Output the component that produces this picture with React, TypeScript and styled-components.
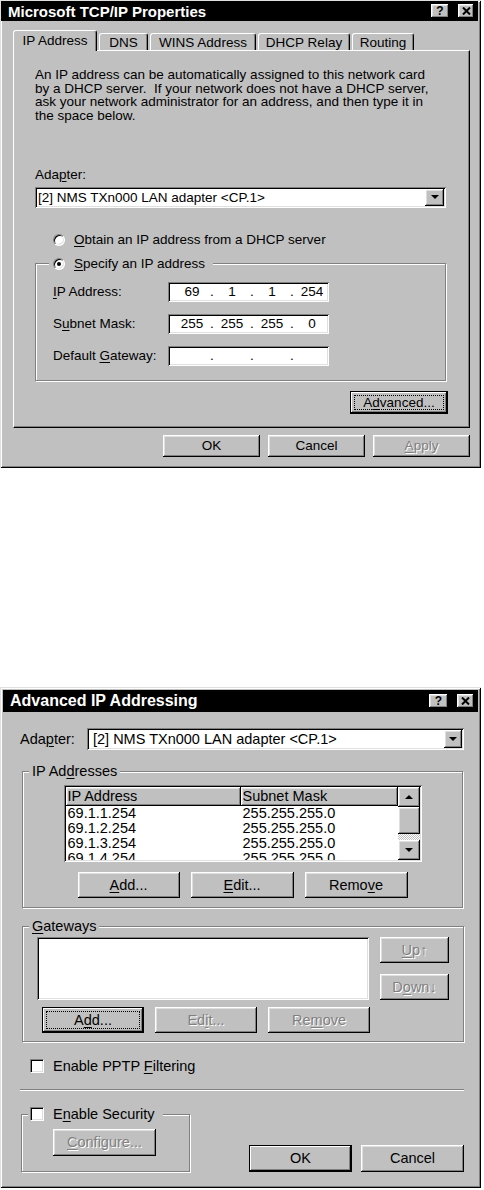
import React from 'react';
import styled, { createGlobalStyle, css } from 'styled-components';

const FACE = '#c0c0c0';

const GlobalStyle = createGlobalStyle`
  html, body { margin: 0; padding: 0; background: #fff; }
  body {
    font-family: "Liberation Sans", Arial, sans-serif;
    color: #000;
  }
  u { text-decoration-thickness: 1px; text-underline-offset: 2px; }
`;

// classic 3D bevels
const raised = css`
  box-shadow: inset -1px -1px 0 #000, inset 1px 1px 0 #fff, inset -2px -2px 0 #808080, inset 2px 2px 0 #dfdfdf;
`;
const defaultRaised = css`
  box-shadow: inset 0 0 0 1px #000, inset -2px -2px 0 #000, inset 2px 2px 0 #fff, inset -3px -3px 0 #808080;
`;
const sunken = css`
  box-shadow: inset 1px 1px 0 #808080, inset -1px -1px 0 #fff, inset 2px 2px 0 #000, inset -2px -2px 0 #dfdfdf;
`;
const frame = css`
  box-shadow: inset 1px 1px 0 #dfdfdf, inset -1px -1px 0 #000, inset 2px 2px 0 #fff, inset -2px -2px 0 #808080;
`;

const Page = styled.div`
  display: flex;
  flex-direction: column;
  align-items: flex-start;
`;

const Window = styled.div<{ $font: number; $pad: string; $mt?: number }>`
  width: 481px;
  box-sizing: border-box;
  margin-top: ${p => p.$mt ?? 0}px;
  padding: ${p => p.$pad};
  background: ${FACE};
  font-size: ${p => p.$font}px;
  ${frame}
`;

const TitleBar = styled.div<{ $h: number; $font: number }>`
  height: ${p => p.$h}px;
  display: flex;
  align-items: center;
  background: #000;
  color: #fff;
  font-size: ${p => p.$font}px;
  font-weight: bold;
  padding: 0 4px 0 7px;
`;

const TitleText = styled.span`
  flex: 1;
  white-space: nowrap;
`;

const CaptionButton = styled.span<{ $w: number; $ml?: number }>`
  width: ${p => p.$w}px;
  height: 14px;
  margin-left: ${p => p.$ml ?? 0}px;
  box-sizing: border-box;
  background: ${FACE};
  color: #000;
  display: flex;
  align-items: center;
  justify-content: center;
  font-size: 12px;
  font-weight: bold;
  ${raised}
`;

const Body = styled.div<{ $pad: string }>`
  padding: ${p => p.$pad};
`;

const TabStrip = styled.div`
  display: flex;
  align-items: flex-end;
  gap: 2px;
  height: 20px;
`;

const Tab = styled.div<{ $w: number; $active?: boolean }>`
  position: relative;
  z-index: ${p => (p.$active ? 1 : 0)};
  width: ${p => p.$w}px;
  height: ${p => (p.$active ? 21 : 17)}px;
  margin-bottom: ${p => (p.$active ? -1 : 0)}px;
  box-sizing: border-box;
  background: ${FACE};
  border: 1px solid;
  border-color: #fff #000 transparent #fff;
  border-bottom: none;
  border-radius: 3px 3px 0 0;
  box-shadow: inset -1px 0 0 #808080;
  display: flex;
  align-items: center;
  justify-content: center;
  padding-bottom: ${p => (p.$active ? 1 : 0)}px;
  white-space: nowrap;
`;

const TabPanel = styled.div`
  width: 457px;
  height: 378px;
  box-sizing: border-box;
  border: 1px solid;
  border-color: #fff #000 #000 #fff;
  box-shadow: inset -1px -1px 0 #808080;
  padding: 17px 23px 0 21px;
`;

const Paragraph = styled.p`
  margin: 0;
  white-space: pre;
  line-height: 13.7px;
`;

const Caption = styled.div<{ $mt?: number }>`
  margin-top: ${p => p.$mt ?? 0}px;
  line-height: 14px;
`;

const ComboBox = styled.div<{ $w?: number; $h: number; $mt?: number }>`
  display: flex;
  align-items: stretch;
  ${p => (p.$w ? `width: ${p.$w}px;` : 'flex: 1;')}
  height: ${p => p.$h}px;
  margin-top: ${p => p.$mt ?? 0}px;
  box-sizing: border-box;
  padding: 2px;
  background: #fff;
  ${sunken}
`;

const ComboText = styled.span<{ $pl: number }>`
  flex: 1;
  display: flex;
  align-items: center;
  padding-left: ${p => p.$pl}px;
  white-space: nowrap;
`;

const DropButton = styled.span<{ $w: number }>`
  width: ${p => p.$w}px;
  background: ${FACE};
  display: flex;
  align-items: center;
  justify-content: center;
  ${raised}
`;

const Arrow = styled.span<{ $up?: boolean; $size: number }>`
  width: 0;
  height: 0;
  border-left: ${p => p.$size}px solid transparent;
  border-right: ${p => p.$size}px solid transparent;
  ${p =>
    p.$up
      ? `border-bottom: ${p.$size}px solid #000;`
      : `border-top: ${p.$size}px solid #000;`}
`;

const RadioRow = styled.div<{ $mt?: number; $ml?: number }>`
  display: flex;
  align-items: center;
  gap: 9px;
  height: 14px;
  margin-top: ${p => p.$mt ?? 0}px;
  margin-left: ${p => p.$ml ?? 0}px;
  white-space: nowrap;
`;

const Radio = styled.span<{ $checked?: boolean }>`
  position: relative;
  flex: none;
  width: 12px;
  height: 12px;
  box-sizing: border-box;
  border-radius: 50%;
  background: #fff;
  border: 1px solid;
  border-color: #808080 #fff #fff #808080;
  box-shadow: inset 1px 1px 0 #000, inset -1px -1px 0 #dfdfdf;
  &::after {
    content: '';
    display: ${p => (p.$checked ? 'block' : 'none')};
    position: absolute;
    left: 3px;
    top: 3px;
    width: 4px;
    height: 4px;
    border-radius: 50%;
    background: #000;
  }
`;

const CheckBox = styled.span`
  flex: none;
  width: 14px;
  height: 14px;
  box-sizing: border-box;
  background: #fff;
  border: 1px solid;
  border-color: #808080 #fff #fff #808080;
  box-shadow: inset 1px 1px 0 #000, inset -1px -1px 0 #dfdfdf;
`;

const CheckRow = styled.div<{ $mt?: number; $ml?: number }>`
  display: flex;
  align-items: center;
  gap: 9px;
  height: 16px;
  margin-top: ${p => p.$mt ?? 0}px;
  margin-left: ${p => p.$ml ?? 0}px;
  white-space: nowrap;
`;

// etched group frame; horizontal padding lives in GroupInner so the legend stays put
const GroupBox = styled.fieldset<{ $w?: number; $mt?: number; $ml?: number; $pt: number; $pb: number }>`
  margin: ${p => p.$mt ?? 0}px 0 0 ${p => p.$ml ?? 0}px;
  padding: ${p => p.$pt}px 0 ${p => p.$pb}px 0;
  min-inline-size: 0;
  box-sizing: border-box;
  ${p => (p.$w ? `width: ${p.$w}px;` : '')}
  border: 1px solid #808080;
  box-shadow: inset 1px 1px 0 #fff, 1px 1px 0 #fff;
`;

const GroupLegend = styled.legend<{ $ml: number; $pad: string }>`
  margin-left: ${p => p.$ml}px;
  padding: ${p => p.$pad};
  line-height: 16px;
  background: ${FACE};
  white-space: nowrap;
`;

const GroupInner = styled.div<{ $pl: number }>`
  padding-left: ${p => p.$pl}px;
`;

const FieldRows = styled.div`
  display: flex;
  flex-direction: column;
  gap: 12px;
`;

const IpRow = styled.div`
  display: flex;
  align-items: center;
  height: 20px;
`;

const FieldLabel = styled.span`
  width: 115px;
  flex: none;
  white-space: nowrap;
`;

const IpField = styled.div`
  width: 161px;
  height: 20px;
  box-sizing: border-box;
  padding-left: 7px;
  background: #fff;
  display: grid;
  grid-template-columns: 1fr 6px 1fr 6px 1fr 6px 1fr;
  align-items: center;
  text-align: center;
  ${sunken}
`;

const Button = styled.button<{ $w: number; $h: number; $default?: boolean; $focus?: boolean }>`
  width: ${p => p.$w}px;
  height: ${p => p.$h}px;
  box-sizing: border-box;
  margin: 0;
  padding: 0;
  border: none;
  border-radius: 0;
  background: ${FACE};
  color: #000;
  font: inherit;
  line-height: 1;
  ${p => (p.$default ? defaultRaised : raised)}
  outline: ${p => (p.$focus ? '1px dotted #000' : 'none')};
  outline-offset: -5px;
  &:disabled {
    color: #808080;
    text-shadow: 1px 1px 0 #fff;
  }
`;

const ButtonLine = styled.div<{ $gap: number; $mt?: number; $mr?: number; $ml?: number; $justify?: string }>`
  display: flex;
  gap: ${p => p.$gap}px;
  justify-content: ${p => p.$justify ?? 'flex-end'};
  margin-top: ${p => p.$mt ?? 0}px;
  margin-right: ${p => p.$mr ?? 0}px;
  margin-left: ${p => p.$ml ?? 0}px;
`;

const AdapterRow = styled.div`
  display: flex;
  align-items: center;
  margin-top: 16px;
`;

const RowLabel = styled.span<{ $w: number }>`
  width: ${p => p.$w}px;
  flex: none;
`;

const ListView = styled.div`
  width: 358px;
  height: 77px;
  margin: 0 auto;
  box-sizing: border-box;
  padding: 2px;
  background: #fff;
  display: flex;
  ${sunken}
`;

const ListBody = styled.div`
  flex: 1;
  overflow: hidden;
`;

const ListHeader = styled.div`
  display: grid;
  grid-template-columns: 175px 1fr;
  height: 19px;
`;

const HeaderCell = styled.div`
  background: ${FACE};
  padding-left: 2px;
  line-height: 19px;
  white-space: nowrap;
  ${raised}
`;

const ListRow = styled.div`
  display: grid;
  grid-template-columns: 175px 1fr;
  height: 15px;
  line-height: 15px;
  padding-left: 2px;
  white-space: nowrap;
`;

const ScrollBar = styled.div`
  width: 22px;
  display: flex;
  flex-direction: column;
`;

const ScrollButton = styled.div`
  height: 20px;
  background: ${FACE};
  display: flex;
  align-items: center;
  justify-content: center;
  ${raised}
`;

const ScrollThumb = styled.div`
  height: 27px;
  background: ${FACE};
  ${raised}
`;

const ScrollTrack = styled.div`
  flex: 1;
  background: repeating-conic-gradient(#fff 0 25%, ${FACE} 0 50%) 0 0 / 2px 2px;
`;

const GatewayRow = styled.div`
  display: flex;
  align-items: flex-start;
`;

const GatewayList = styled.div`
  width: 332px;
  height: 63px;
  background: #fff;
  ${sunken}
`;

const SideButtons = styled.div`
  display: flex;
  flex-direction: column;
  gap: 11px;
  margin-left: 11px;
`;

const Separator = styled.div<{ $mt: number }>`
  margin-top: ${p => p.$mt}px;
  border-top: 1px solid #808080;
  border-bottom: 1px solid #fff;
`;

const BottomRow = styled.div`
  display: flex;
  align-items: flex-end;
  justify-content: space-between;
  margin-top: 15px;
`;

const CloseGlyph = () => (
  <svg width="9" height="8" viewBox="0 0 9 8">
    <path d="M1 0.5 L8 7.5 M8 0.5 L1 7.5" stroke="#000" strokeWidth="2" fill="none" />
  </svg>
);

const CaptionButtons = ({ helpW, closeW }: { helpW: number; closeW: number }) => (
  <>
    <CaptionButton $w={helpW}>?</CaptionButton>
    <CaptionButton $w={closeW} $ml={9}>
      <CloseGlyph />
    </CaptionButton>
  </>
);

const tabs = [
  { label: 'IP Address', w: 84, active: true },
  { label: 'DNS', w: 49 },
  { label: 'WINS Address', w: 106 },
  { label: 'DHCP Relay', w: 92 },
  { label: 'Routing', w: 62 },
];

const intro = `An IP address can be automatically assigned to this network card
by a DHCP server.  If your network does not have a DHCP server,
ask your network administrator for an address, and then type it in
the space below.`;

const IpInput = ({ parts }: { parts: string[] }) => (
  <IpField>
    {parts.map((part, i) => (
      <React.Fragment key={i}>
        {i > 0 && <span>.</span>}
        <span>{part}</span>
      </React.Fragment>
    ))}
  </IpField>
);

const TcpIpDialog = () => (
  <Window $font={13.5} $pad="1px 3px 3px 1px">
    <TitleBar $h={20} $font={15}>
      <TitleText>Microsoft TCP/IP Properties</TitleText>
      <CaptionButtons helpW={18} closeW={16} />
    </TitleBar>
    <Body $pad="9px 8px 8px 12px">
      <TabStrip>
        {tabs.map(t => (
          <Tab key={t.label} $w={t.w} $active={t.active}>
            {t.label}
          </Tab>
        ))}
      </TabStrip>
      <TabPanel>
        <Paragraph>{intro}</Paragraph>
        <Caption $mt={45}>
          Ada<u>p</u>ter:
        </Caption>
        <ComboBox $w={411} $h={21} $mt={5}>
          <ComboText $pl={1}>[2] NMS TXn000 LAN adapter &lt;CP.1&gt;</ComboText>
          <DropButton $w={19}>
            <Arrow $size={4} />
          </DropButton>
        </ComboBox>
        <RadioRow $mt={25} $ml={18}>
          <Radio />
          <span>
            <u>O</u>btain an IP address from a DHCP server
          </span>
        </RadioRow>
        <GroupBox $w={411} $mt={10} $pt={11} $pb={14}>
          <GroupLegend $ml={13} $pad="0 8px 0 4px">
            <RadioRow>
              <Radio $checked />
              <span>
                <u>S</u>pecify an IP address
              </span>
            </RadioRow>
          </GroupLegend>
          <GroupInner $pl={17}>
            <FieldRows>
              <IpRow>
                <FieldLabel>
                  <u>I</u>P Address:
                </FieldLabel>
                <IpInput parts={['69', '1', '1', '254']} />
              </IpRow>
              <IpRow>
                <FieldLabel>
                  S<u>u</u>bnet Mask:
                </FieldLabel>
                <IpInput parts={['255', '255', '255', '0']} />
              </IpRow>
              <IpRow>
                <FieldLabel>
                  Default <u>G</u>ateway:
                </FieldLabel>
                <IpInput parts={['', '', '', '']} />
              </IpRow>
            </FieldRows>
          </GroupInner>
        </GroupBox>
        <ButtonLine $gap={0} $mt={10} $mr={-2}>
          <Button $w={98} $h={23} $default $focus>
            A<u>d</u>vanced...
          </Button>
        </ButtonLine>
      </TabPanel>
      <ButtonLine $gap={8} $mt={7}>
        <Button $w={97} $h={22}>OK</Button>
        <Button $w={97} $h={22}>Cancel</Button>
        <Button $w={97} $h={22} disabled>
          <u>A</u>pply
        </Button>
      </ButtonLine>
    </Body>
  </Window>
);

const addresses = ['69.1.1.254', '69.1.2.254', '69.1.3.254', '69.1.4.254'];

const AdvancedDialog = () => (
  <Window $font={14.5} $pad="3px" $mt={219}>
    <TitleBar $h={22} $font={16}>
      <TitleText>Advanced IP Addressing</TitleText>
      <CaptionButtons helpW={19} closeW={17} />
    </TitleBar>
    <Body $pad="0 14px 13px 17px">
      <AdapterRow>
        <RowLabel $w={67}>
          Ada<u>p</u>ter:
        </RowLabel>
        <ComboBox $h={22}>
          <ComboText $pl={4}>[2] NMS TXn000 LAN adapter &lt;CP.1&gt;</ComboText>
          <DropButton $w={18}>
            <Arrow $size={4} />
          </DropButton>
        </ComboBox>
      </AdapterRow>

      <GroupBox $w={441} $mt={13} $ml={2} $pt={6} $pb={9}>
        <GroupLegend $ml={6} $pad="0 3px">
          IP Ad<u>d</u>resses
        </GroupLegend>
        <ListView>
          <ListBody>
            <ListHeader>
              <HeaderCell>IP Address</HeaderCell>
              <HeaderCell>Subnet Mask</HeaderCell>
            </ListHeader>
            {addresses.map(a => (
              <ListRow key={a}>
                <span>{a}</span>
                <span>255.255.255.0</span>
              </ListRow>
            ))}
          </ListBody>
          <ScrollBar>
            <ScrollButton>
              <Arrow $up $size={4} />
            </ScrollButton>
            <ScrollThumb />
            <ScrollTrack />
            <ScrollButton>
              <Arrow $size={4} />
            </ScrollButton>
          </ScrollBar>
        </ListView>
        <ButtonLine $gap={11} $mt={10} $justify="center">
          <Button $w={102} $h={26}>
            <u>A</u>dd...
          </Button>
          <Button $w={103} $h={26}>
            <u>E</u>dit...
          </Button>
          <Button $w={103} $h={26}>
            Remo<u>v</u>e
          </Button>
        </ButtonLine>
      </GroupBox>

      <GroupBox $w={442} $mt={10} $ml={2} $pt={3} $pb={8}>
        <GroupLegend $ml={6} $pad="0 3px">
          <u>G</u>ateways
        </GroupLegend>
        <GroupInner $pl={14}>
          <GatewayRow>
            <GatewayList />
            <SideButtons>
              <Button $w={69} $h={26} disabled>
                <u>U</u>p↑
              </Button>
              <Button $w={69} $h={26} disabled>
                D<u>o</u>wn↓
              </Button>
            </SideButtons>
          </GatewayRow>
          <ButtonLine $gap={11} $mt={7} $ml={5} $justify="flex-start">
            <Button $w={102} $h={26} $default $focus>
              A<u>d</u>d...
            </Button>
            <Button $w={102} $h={26} disabled>
              Ed<u>i</u>t...
            </Button>
            <Button $w={102} $h={26} disabled>
              Re<u>m</u>ove
            </Button>
          </ButtonLine>
        </GroupInner>
      </GroupBox>

      <CheckRow $mt={16} $ml={10}>
        <CheckBox />
        <span>
          Enable PPTP <u>F</u>iltering
        </span>
      </CheckRow>

      <Separator $mt={15} />

      <BottomRow>
        <GroupBox $w={169} $ml={1} $pt={7} $pb={15}>
          <GroupLegend $ml={6} $pad="0 8px 0 2px">
            <CheckRow>
              <CheckBox />
              <span>
                E<u>n</u>able Security
              </span>
            </CheckRow>
          </GroupLegend>
          <GroupInner $pl={31}>
            <Button $w={103} $h={27} disabled>
              <u>C</u>onfigure...
            </Button>
          </GroupInner>
        </GroupBox>
        <ButtonLine $gap={9}>
          <Button $w={103} $h={27} $default>
            OK
          </Button>
          <Button $w={103} $h={27}>
            Cancel
          </Button>
        </ButtonLine>
      </BottomRow>
    </Body>
  </Window>
);

export default function App() {
  return (
    <>
      <GlobalStyle />
      <Page>
        <TcpIpDialog />
        <AdvancedDialog />
      </Page>
    </>
  );
}
